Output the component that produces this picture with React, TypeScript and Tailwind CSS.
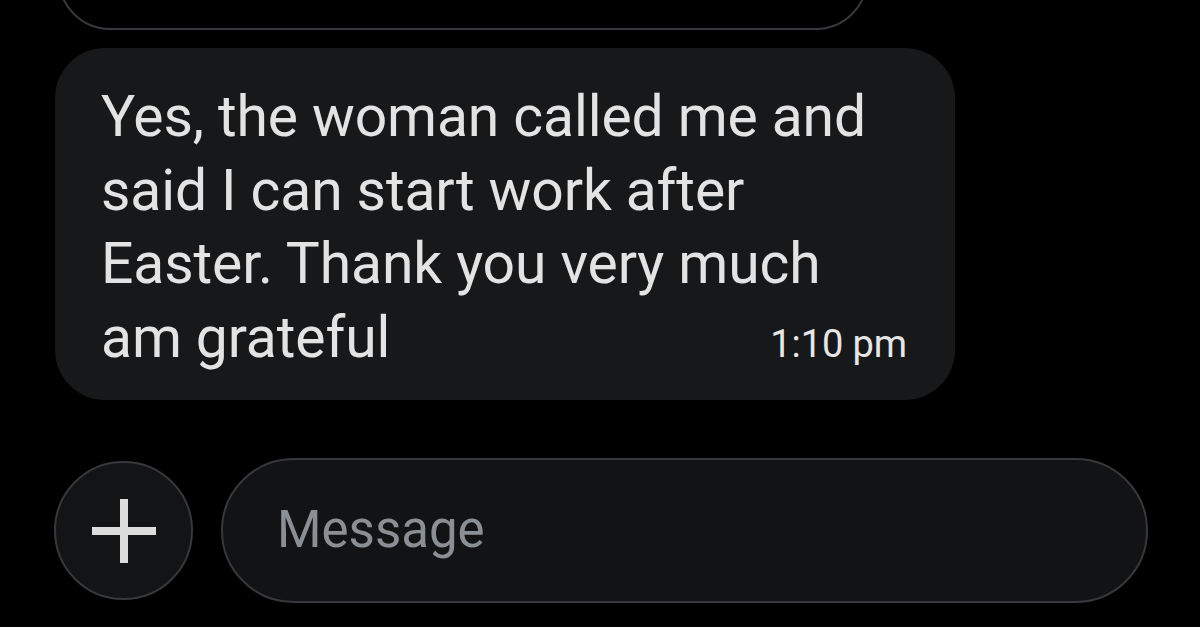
export default function App() {
  return (
    <div className="w-[1200px] h-[627px] bg-black overflow-hidden flex flex-col">
      <div className="ml-[58px] w-[810px] h-[110px] -mt-[80px] rounded-[52px] border-2 border-[#37383b] shrink-0" />
      <div className="ml-[55px] mt-[18px] w-[900px] h-[352px] rounded-[50px] bg-[#17181a] pl-[46px] pr-[48px] pt-[32px] shrink-0 font-['Roboto',sans-serif] text-[#e3e3e3]">
        <div className="text-[57px] leading-[73.5px] tracking-[-0.1px]">
          <div>Yes, the woman called me and</div>
          <div>said I can start work after</div>
          <div>Easter. Thank you very much</div>
          <div className="flex items-baseline justify-between">
            <span>am grateful</span>
            <span className="text-[38px] text-[#e6e6e6]">1:10 pm</span>
          </div>
        </div>
      </div>
      <div className="mt-[58px] flex items-center pl-[54px] font-['Roboto',sans-serif]">
        <div className="w-[139px] h-[139px] rounded-full border-2 border-[#37383b] bg-[#131416] flex items-center justify-center shrink-0">
          <svg width="64" height="64" viewBox="0 0 64 64">
            <rect x="28" y="0" width="8" height="64" fill="#dcdcdc" />
            <rect x="0" y="28" width="64" height="8" fill="#dcdcdc" />
          </svg>
        </div>
        <div className="ml-[28px] w-[927px] h-[145px] rounded-full border-2 border-[#37383b] bg-[#121315] flex items-center pl-[54px]">
          <span className="text-[51px] text-[#8a8f96]">Message</span>
        </div>
      </div>
    </div>
  );
}
